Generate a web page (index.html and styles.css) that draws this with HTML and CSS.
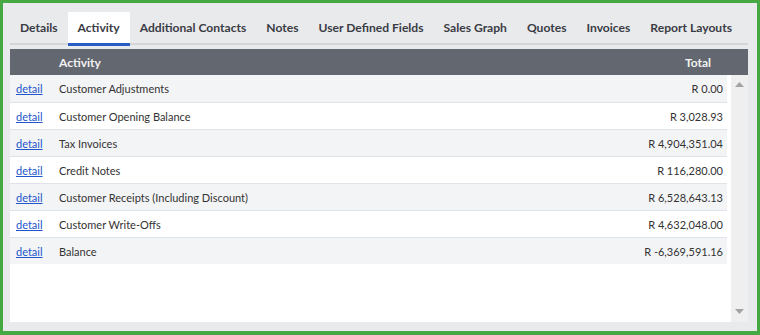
FILE: index.html
```html
<!DOCTYPE html>
<html>
<head>
<meta charset="utf-8">
<link rel="stylesheet" href="styles.css">
</head>
<body>
<div class="frame">
  <div class="tabs">
    <div class="tab">Details</div>
    <div class="tab active">Activity</div>
    <div class="tab">Additional Contacts</div>
    <div class="tab">Notes</div>
    <div class="tab">User Defined Fields</div>
    <div class="tab">Sales Graph</div>
    <div class="tab">Quotes</div>
    <div class="tab">Invoices</div>
    <div class="tab">Report Layouts</div>
  </div>
  <div class="panel">
    <div class="head">
      <div class="c-link"></div>
      <div class="c-name">Activity</div>
      <div class="c-total">Total</div>
    </div>
    <div class="body">
      <div class="rows">
        <div class="row"><a class="c-link" href="#">detail</a><div class="c-name">Customer Adjustments</div><div class="c-total">R 0.00</div></div>
        <div class="row"><a class="c-link" href="#">detail</a><div class="c-name">Customer Opening Balance</div><div class="c-total">R 3,028.93</div></div>
        <div class="row"><a class="c-link" href="#">detail</a><div class="c-name">Tax Invoices</div><div class="c-total">R 4,904,351.04</div></div>
        <div class="row"><a class="c-link" href="#">detail</a><div class="c-name">Credit Notes</div><div class="c-total">R 116,280.00</div></div>
        <div class="row"><a class="c-link" href="#">detail</a><div class="c-name">Customer Receipts (Including Discount)</div><div class="c-total">R 6,528,643.13</div></div>
        <div class="row"><a class="c-link" href="#">detail</a><div class="c-name">Customer Write-Offs</div><div class="c-total">R 4,632,048.00</div></div>
        <div class="row"><a class="c-link" href="#">detail</a><div class="c-name">Balance</div><div class="c-total">R -6,369,591.16</div></div>
      </div>
      <div class="scrollbar">
        <svg class="arrow" width="9" height="5" viewBox="0 0 9 5"><polygon points="0,5 9,5 4.5,0" fill="#a3a3a3"/></svg>
        <svg class="arrow" width="9" height="5" viewBox="0 0 9 5"><polygon points="0,0 9,0 4.5,5" fill="#a3a3a3"/></svg>
      </div>
    </div>
  </div>
</div>
</body>
</html>
```
FILE: styles.css
```css
* { box-sizing: border-box; }
html, body { margin: 0; padding: 0; }
body {
  width: 760px;
  height: 335px;
  font-family: Lato, "Open Sans", sans-serif;
  color: #333;
}
.frame {
  width: 760px;
  height: 335px;
  border: 3px solid #46a843;
  border-bottom-width: 4px;
  background: #e9eaeb;
  padding: 9px 9px 9px 7px;
  display: flex;
  flex-direction: column;
}
.tabs {
  display: flex;
  flex: none;
  height: 33px;
  border-bottom: 2px solid #d5d6d8;
}
.tab {
  flex: none;
  white-space: nowrap;
  padding: 0 10px;
  height: 34px;
  line-height: 32px;
  font-size: 12.1px;
  font-weight: 700;
  color: #3a3c45;
  border-bottom: 3px solid transparent;
}
.tab.active {
  background: #fff;
  border-bottom-color: #2a5cc5;
}
.panel {
  margin-top: 4px;
  flex: 1;
  display: flex;
  flex-direction: column;
  background: #fff;
}
.head {
  flex: none;
  height: 26px;
  background: #636770;
  color: #f2f2f2;
  display: flex;
  align-items: center;
  font-size: 12px;
  font-weight: 700;
  padding-right: 37px;
}
.c-link { width: 49px; padding-left: 6px; flex: none; }
.c-name { flex: 1; }
.c-total { text-align: right; white-space: nowrap; }
.body {
  flex: 1;
  display: flex;
  min-height: 0;
}
.rows {
  flex: 1;
  padding-right: 4px;
}
.row {
  height: 27px;
  display: flex;
  align-items: center;
  font-size: 11px;
  border-top: 1px solid #e0e3e7;
  padding-right: 4px;
  background: #fff;
}
.row:first-child { border-top: none; }
.row:nth-child(odd) { background: #f3f4f6; }
a.c-link {
  color: #2255cc;
  text-decoration: underline;
}
.scrollbar {
  width: 17px;
  background: #efefef;
  display: flex;
  flex-direction: column;
  justify-content: space-between;
  align-items: center;
  padding: 7px 0 8px;
}
.arrow { display: block; }
```
